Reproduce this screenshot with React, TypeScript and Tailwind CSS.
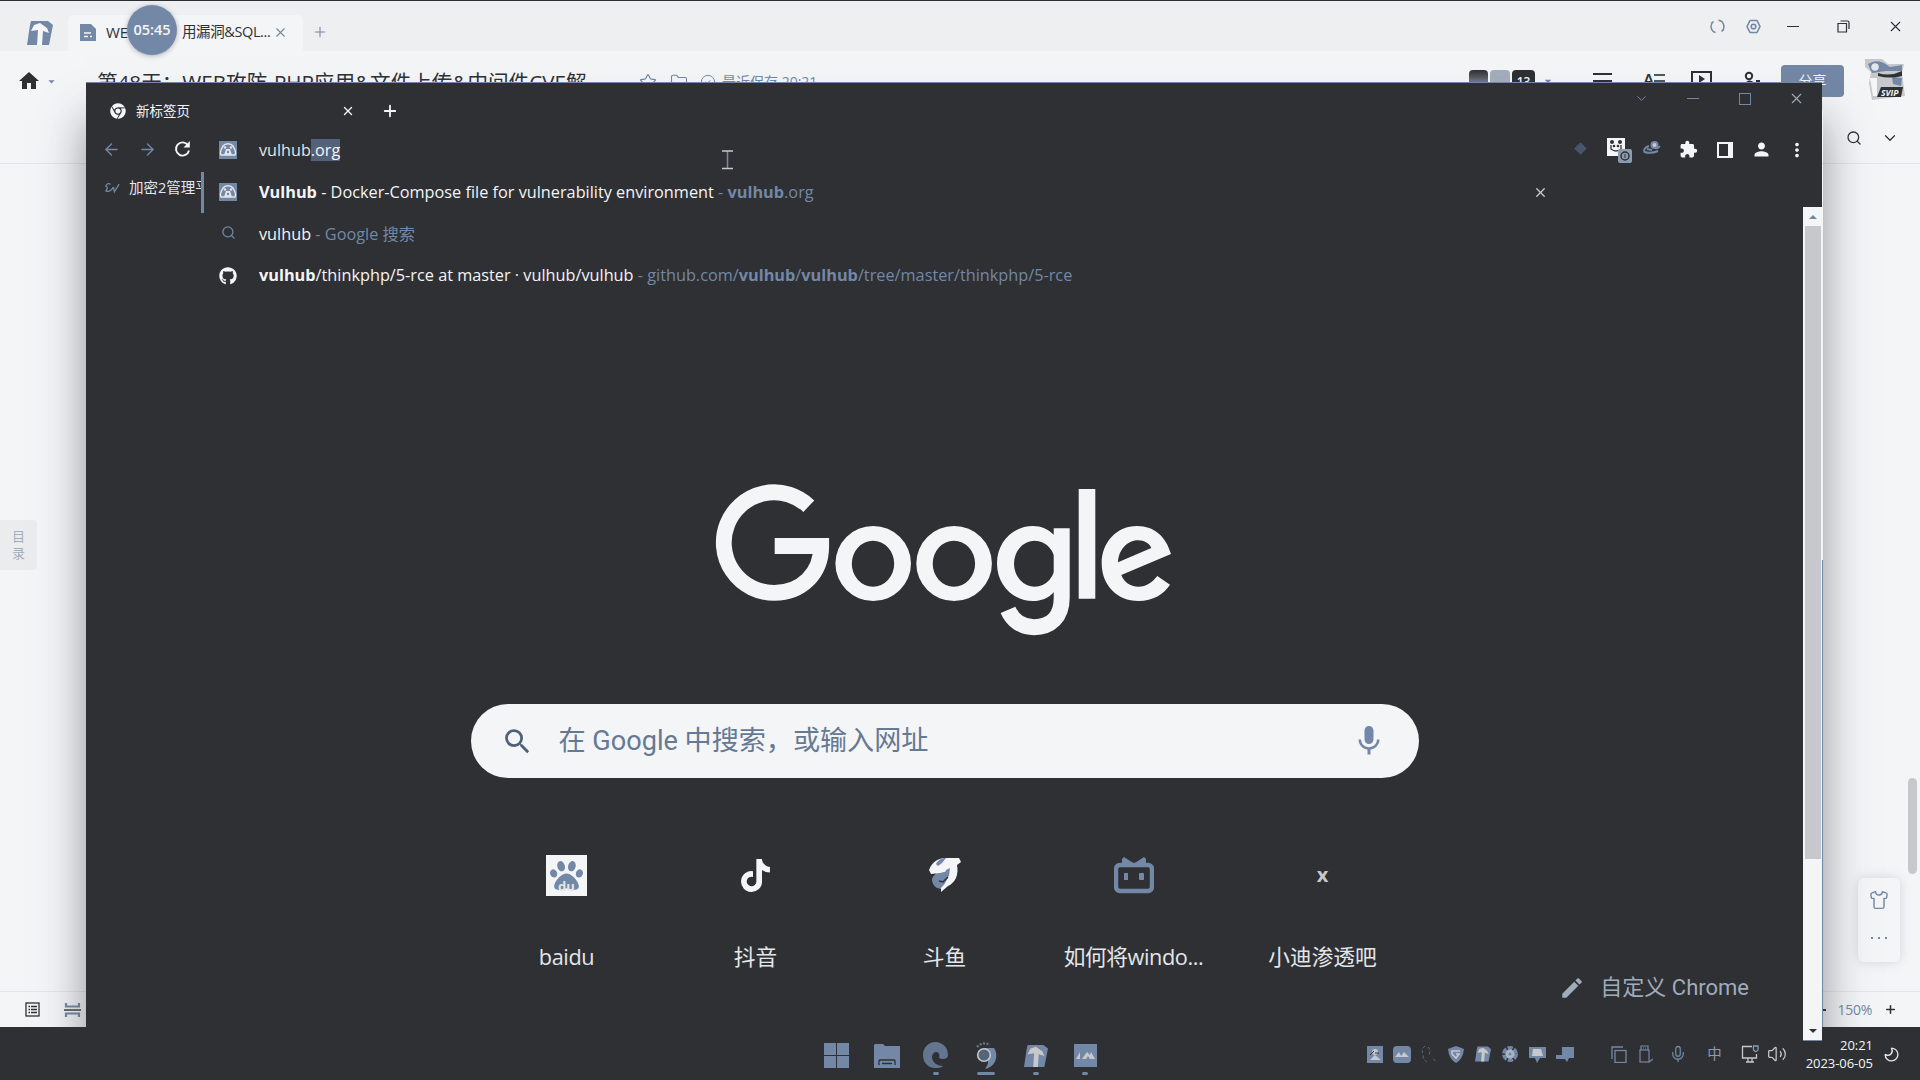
import React from "react";
import {
  MdHome, MdArrowDropDown, MdExtension, MdPerson, MdMoreVert, MdSearch, MdMic, MdEdit,
} from "react-icons/md";
import { FaGithub, FaPaw, FaTiktok, FaChrome } from "react-icons/fa";
import {
  ArrowLeft, ArrowRight, X, Plus, Search, ChevronDown, Star, Folder, CircleCheck, Shirt,
  Mic, Volume2, Moon,
} from "lucide-react";

const ui = "font-['Open_Sans','Noto_Sans_CJK_SC',sans-serif]";
const blue = "text-[#7388a6]";

function Slot({ w, children, className = "" }: { w: string; children?: React.ReactNode; className?: string }) {
  return <div className={`flex shrink-0 items-center justify-center ${w} ${className}`}>{children}</div>;
}

function TLogo({ size, bg, fg }: { size: number; bg: string; fg: string }) {
  return (
    <svg width={size} height={size} viewBox="0 0 26 24" className="shrink-0">
      <path d="M4 0H21L26 4L22 24H0L3 4Z" fill={bg} />
      <path d="M4 10L7 4L13 2L20 7L22 12L16 10L15 24H10L11 9Z" fill={fg} />
    </svg>
  );
}

function VulhubIcon() {
  return (
    <svg width="18" height="18" viewBox="0 0 18 18" className="shrink-0">
      <rect width="18" height="18" fill="#7388a6" />
      <path d="M2 14C0 10 3 8 4 5C6 2 12 2 14 5C15 8 18 10 16 14Z" fill="none" stroke="#e4e6ea" strokeWidth="1.4" />
      <path d="M5 14L7 8H11L13 14Z" fill="#e4e6ea" />
      <circle cx="6" cy="6.5" r="1.2" fill="#e4e6ea" />
      <circle cx="12" cy="6.5" r="1.2" fill="#e4e6ea" />
      <circle cx="9" cy="11" r="1.2" fill="#7388a6" />
    </svg>
  );
}

function GoogleLogo() {
  return (
    <svg width="500" height="190" viewBox="0 0 500 190" role="img" aria-label="Google" className="block">
      <g fill="none" stroke="#f4f5f7">
        <path d="M118.8 46.2A50.3 50.3 0 1 0 84.3 132.9C111 132.9 131.2 114 131.2 86H84.7" strokeWidth="15.8" />
        <path d="M371.7 68.3V138C371.7 157 360.5 167.2 344 167.2C332 167.2 322.5 160.5 318 149.8" strokeWidth="16" />
        <path d="M397 29V138.7" strokeWidth="16.6" />
      </g>
      <g fill="#f4f5f7" fillRule="evenodd">
        <path d="M145.4 103.5a37.8 37.5 0 1 0 75.6 0a37.8 37.5 0 1 0 -75.6 0ZM161.8 103.7a21.2 23 0 1 0 42.4 0a21.2 23 0 1 0 -42.4 0Z" />
        <path d="M226.3 103.5a37.8 37.5 0 1 0 75.6 0a37.8 37.5 0 1 0 -75.6 0ZM242.7 103.7a21.2 23 0 1 0 42.4 0a21.2 23 0 1 0 -42.4 0Z" />
        <path d="M364 75C358 69 351 66 343 66C323 66 307 82 307 103.5C307 125 323 141 343 141C351 141 358 138.5 364 132ZM324 103.7a20.7 23 0 1 0 41.4 0a20.7 23 0 1 0 -41.4 0Z" />
        <path d="M481 94L431.3 115C434 122 440 126.7 448.5 126.7C456.5 126.7 462 122.5 467.3 116L480 124.7C474 134 463 141 448.5 141C427 141 411.7 125 411.7 103.5C411.7 82 427 66 447 66C465 66 476 77 481 94ZM428 102.3L461.3 88C459.5 83.5 454.5 80.3 448 80.3C437 80.3 428.5 90 428 102.3Z" />
      </g>
    </svg>
  );
}

function DouyuIcon() {
  return (
    <svg width="34" height="36" viewBox="0 0 34 36">
      <path d="M4 22C6 16 14 12 18 12L24 24L14 32C8 32 4 28 4 22Z" fill="#7388a6" />
      <path d="M1 13C4 5 10 1 18 1H31L33 5L29 8C31 18 27 26 20 29L13 35V31C20 24 21 18 20 14L12 16L3 17Z" fill="#f4f5f7" />
      <path d="M8 7C10 3 14 1 18 1L14 6L10 9Z" fill="#7388a6" />
      <path d="M18 13L22 11L21 19L16 22Z" fill="#7388a6" />
      <path d="M11 24L15 25L20 20" fill="none" stroke="#2e3034" strokeWidth="1.5" />
    </svg>
  );
}

function BiliIcon() {
  return (
    <svg width="40" height="37" viewBox="0 0 40 37">
      <rect x="2" y="8" width="36" height="26" rx="4" fill="none" stroke="#7388a6" strokeWidth="4.4" />
      <path d="M8 8V2L10 0L20 6.500L30 0L32 2V8Z" fill="#7388a6" />
      <rect x="10" y="16" width="4" height="7" fill="#7388a6" />
      <rect x="25" y="16" width="5" height="7" rx="1" fill="#7388a6" />
    </svg>
  );
}

function EditorHeader() {
  return (
    <header className="shrink-0">
      <div className="flex h-[51px] items-end border-t border-[#2e3034] bg-[#eeeff1]">
        <div className="flex h-full w-[68px] items-center pl-[27px] pt-[14px]"><TLogo size={26} bg="#7388a6" fg="#f4f5f7" /></div>
        <div className="flex h-[36px] w-[235px] items-center rounded-t-md bg-[#f4f5f7] pb-[2px] pl-3 text-[15px] text-[#2e3034]">
          <svg width="16" height="17" viewBox="0 0 16 17"><path d="M0 0H11L16 5V17H0Z" fill="#7388a6" /><path d="M4 9H11M4 12.5H8M10 12.5H12" stroke="#f4f5f7" strokeWidth="1.4" /></svg>
          <span className="ml-[10px] w-[76px]">WE</span>
          <span className="whitespace-nowrap text-[14.5px] tracking-[-0.4px]">用漏洞&amp;SQL...</span>
          <X size={15} strokeWidth={1.8} className="ml-auto mr-[15px] text-[#7388a6]" />
        </div>
        <Slot w="w-[34px]" className="h-[36px] pb-[2px]"><Plus size={16} strokeWidth={1.6} className={blue} /></Slot>
        <div className="ml-auto flex h-full items-center">
          <Slot w="w-[36px]">
            <svg width="15" height="15" viewBox="0 0 15 15" fill="none" stroke="#7388a6" strokeWidth="1.5"><path d="M1 4.500L3.500 2.500M3.500 2.500A6.300 6.300 0 0 0 5.500 13.500M14 10.500L11.500 12.500M11.500 12.500A6.300 6.300 0 0 0 8.500 1.300" /></svg>
          </Slot>
          <Slot w="w-[36px]">
            <svg width="15" height="15" viewBox="0 0 15 15" fill="none" stroke="#7388a6" strokeWidth="1.6"><path d="M4 1.5H11L14 7.5L11 13.5H4L1 7.5Z" strokeLinejoin="round" /><circle cx="7.5" cy="7.5" r="2.3" /></svg>
          </Slot>
          <Slot w="w-[44px]"><span className="h-px w-[12px] bg-[#2e3034]" /></Slot>
          <Slot w="w-[56px]">
            <svg width="13" height="13" viewBox="0 0 13 13" fill="none" stroke="#2e3034" strokeWidth="1.2"><path d="M1 3.5H9.5V12H1ZM3.5 1H10.5Q12 1 12 2.5V9" /></svg>
          </Slot>
          <Slot w="w-[49px]"><X size={17} strokeWidth={1.5} className="text-[#2e3034]" /></Slot>
        </div>
      </div>
      <div className="flex h-[112px] items-start bg-[#f4f5f7]">
        <div className="flex w-[97px] items-center pl-[17px] pt-[18px] text-[#2e3034]">
          <MdHome size={24} />
          <MdArrowDropDown size={15} className="ml-[3px] text-[#7388a6]" />
        </div>
        <h1 className="w-[542px] whitespace-nowrap pt-[13px] text-[20.6px] leading-[36px] text-[#2e3034]">第48天：WEB攻防-PHP应用&amp;文件上传&amp;中间件CVE解</h1>
        <div className="flex items-center pt-[21px] text-[#7388a6]">
          <Star size={18} strokeWidth={1.5} />
          <Folder size={18} strokeWidth={1.5} className="ml-[13px]" />
          <CircleCheck size={16} strokeWidth={1.5} className="ml-[12px]" />
          <span className="ml-[6px] whitespace-nowrap text-[14px] leading-5">最近保存 20:21</span>
        </div>
        <div className="ml-auto flex items-start">
          <div className="mt-[19px] flex gap-[2px]">
            <span className="h-5 w-[19px] rounded bg-gradient-to-b from-[#2e3034] to-[#a3adbb]" />
            <span className="h-5 w-[20px] rounded bg-[#a3adbb]" />
            <span className="h-5 w-[23px] rounded bg-[#2e3034] pt-[2px] text-center text-[12px] font-semibold leading-5 text-[#f4f5f7]">13</span>
          </div>
          <MdArrowDropDown size={16} className="ml-[5px] mt-[22px] text-[#7388a6]" />
          <div className="ml-[37px] mt-[22px] flex w-[19px] flex-col gap-[5px]">
            <span className="h-[2px] bg-[#2e3034]" /><span className="h-[2px] bg-[#2e3034]" />
          </div>
          <div className="ml-[31px] mt-[19px] flex w-[22px] text-[17px] font-semibold leading-5 text-[#2e3034]">
            A
            <span className="mt-[4px] flex w-[11px] flex-col gap-[4px]"><span className="h-[2px] bg-[#4b586b]" /><span className="h-[2px] bg-[#4b586b]" /></span>
          </div>
          <svg width="21" height="18" viewBox="0 0 21 18" className="ml-[26px] mt-[20px]"><rect x="1" y="1" width="19" height="16" fill="none" stroke="#2e3034" strokeWidth="2" /><path d="M8 4L14 8L8 12Z" fill="#2e3034" /></svg>
          <svg width="20" height="18" viewBox="0 0 20 18" className="ml-[32px] mt-[20px]" fill="none" stroke="#2e3034" strokeWidth="2"><circle cx="5" cy="5" r="3.2" /><path d="M0 15Q5 7 10 13M12 10H16" /></svg>
          <div className="ml-[17px] mt-[14px] h-[32px] w-[63px] rounded-[4px] bg-[#7388a6] text-center text-[14px] leading-8 text-[#f4f5f7]">分享</div>
          <svg width="44" height="44" viewBox="0 0 44 44" className="ml-[20px] mr-[12px] mt-[7px]">
            <path d="M1 1L18 1L24 6L40 6L38 15L41 38L8 42L5 25L7 14L1 9Z" fill="#c6c8cc" />
            <path d="M4 6Q12 1 20 5L26 9L38 7V13L22 13L8 15ZM28 19L38 20L37 28L29 26Z" fill="#7388a6" />
            <circle cx="11" cy="9" r="4.500" fill="#e4e6ea" stroke="#7388a6" strokeWidth="1.500" />
            <path d="M14 15Q26 19 38 13V18Q26 21 14 18Z" fill="#2e3034" />
            <path d="M6 20H13V38H9Z" fill="#f4f5f7" />
            <path d="M17 29H39L37 39H13Z" fill="#2e3034" />
            <text x="17" y="38" fontSize="8.5" fontWeight="700" fontStyle="italic" fill="#f4f5f7" fontFamily="Open Sans">SVIP</text>
          </svg>
        </div>
      </div>
    </header>
  );
}

function EditorTools() {
  return (
    <div className="flex text-[#2e3034]">
      <Slot w="w-[36px]"><Search size={16} strokeWidth={1.9} /></Slot>
      <Slot w="w-[36px]"><ChevronDown size={18} strokeWidth={1.6} /></Slot>
    </div>
  );
}

function TabStrip() {
  return (
    <div className="flex h-[47px] items-start">
      <div className="mt-[17px] flex h-[24px] w-[278px] items-center pl-[24px]">
        <FaChrome size={16} className="shrink-0 text-[#f4f5f7]" />
        <span className="ml-[10px] text-[13.5px] text-[#f4f5f7]">新标签页</span>
        <X size={14} strokeWidth={2.4} className="ml-auto mr-[9px] text-[#f4f5f7]" />
      </div>
      <Slot w="w-[52px]" className="mt-[17px] h-[24px]"><Plus size={18} strokeWidth={2.4} className="text-[#f4f5f7]" /></Slot>
      <div className="ml-auto flex h-[33px] items-center text-[#7388a6]">
        <Slot w="w-[52px]"><ChevronDown size={15} strokeWidth={1.6} /></Slot>
        <Slot w="w-[52px]"><span className="h-px w-[12px] bg-[#7388a6]" /></Slot>
        <Slot w="w-[51px]"><span className="h-[12px] w-[12px] border border-[#7388a6]" /></Slot>
        <Slot w="w-[52px]"><X size={17} strokeWidth={1.5} className="text-[#a3adbb]" /></Slot>
      </div>
    </div>
  );
}

function Toolbar() {
  return (
    <div className="flex h-[41px] items-center">
      <div className="flex w-[133px] items-center pl-[16px]">
        <ArrowLeft size={19} strokeWidth={1.7} className={blue} />
        <ArrowRight size={19} strokeWidth={1.7} className="ml-[17px] text-[#7388a6]" />
        <svg width="17" height="17" viewBox="0 0 17 17" className="ml-[17px]" fill="none" stroke="#f4f5f7" strokeWidth="1.9"><path d="M14 4.2A6.6 6.6 0 1 0 15 9.5" /><path d="M15.8 0V6.5H9.5Z" fill="#f4f5f7" stroke="none" /></svg>
      </div>
      <VulhubIcon />
      <div className="ml-[22px] mt-px whitespace-nowrap text-[16.2px] leading-[22px] text-[#e4e6ea]">
        vulhub<span className="inline-block bg-[#53617a] text-[#f4f5f7]">.org</span>
      </div>
      <div className="ml-auto flex items-center text-[#f4f5f7]">
        <Slot w="w-[36px]"><span className="-mt-[3px] h-[9px] w-[9px] rotate-45 bg-[#49556a]" /></Slot>
        <Slot w="w-[36px]" className="pl-[8px]">
          <svg width="26" height="26" viewBox="0 0 26 26">
            <rect x="0" y="1" width="18" height="18" fill="#f4f5f7" />
            <circle cx="5" cy="5" r="2" fill="#2e3034" /><circle cx="13" cy="5" r="2" fill="#2e3034" />
            <path d="M4 8V12Q9 16 14 12V8" fill="none" stroke="#2e3034" strokeWidth="1.3" />
            <circle cx="7" cy="9" r="1.3" fill="#2e3034" /><circle cx="11" cy="9" r="1.3" fill="#2e3034" />
            <rect x="11" y="12" width="14" height="14" rx="2" fill="#8d9bb0" />
            <circle cx="18" cy="19" r="4" fill="none" stroke="#2e3034" strokeWidth="1.5" /><path d="M18 17V21" stroke="#2e3034" />
          </svg>
        </Slot>
        <Slot w="w-[36px]" className="pb-[4px]">
          <svg width="18" height="14" viewBox="0 0 18 14" fill="none" stroke="#7388a6" strokeWidth="2"><path d="M6 5Q0 7 1.5 11Q8 13 15 10M4 8L9 9M10 6Q14 9 17 5" /><circle cx="11.5" cy="4" r="3" fill="#c6c8cc" /></svg>
        </Slot>
        <Slot w="w-[37px]"><MdExtension size={19} /></Slot>
        <Slot w="w-[36px]"><span className="flex h-[16px] w-[16px] items-center bg-[#f4f5f7] pl-[2px]"><span className="h-[12px] w-[9px] bg-[#2e3034]" /></span></Slot>
        <Slot w="w-[36px]"><MdPerson size={21} /></Slot>
        <Slot w="w-[35px]"><MdMoreVert size={22} /></Slot>
        <span className="w-[8px]" />
      </div>
    </div>
  );
}

function Suggestions() {
  const row = "flex items-center whitespace-nowrap text-[16.27px] text-[#f4f5f7]";
  return (
    <div className="flex flex-col">
      <div className={`${row} h-[42px]`}>
        <span className="h-[41px] w-[3px] bg-[#7388a6]" />
        <span className="ml-[15px]"><VulhubIcon /></span>
        <p className="ml-[22px]"><b className="font-bold">Vulhub</b> - Docker-Compose file for vulnerability environment <span className={blue}>- <b>vulhub</b>.org</span></p>
        <X size={15} strokeWidth={2.2} className="ml-auto mr-[274px] text-[#c6c8cc]" />
      </div>
      <div className={`${row} h-[42px]`}>
        <span className="ml-[18px] flex w-[18px] justify-center pb-[3px]"><Search size={15} strokeWidth={2.1} className={blue} /></span>
        <p className="ml-[22px] mt-px">vulhub <span className={blue}>- Google 搜索</span></p>
      </div>
      <div className={`${row} h-[41px]`}>
        <FaGithub size={18} className="ml-[18px]" />
        <p className="ml-[22px]"><b>vulhub</b>/thinkphp/5-rce at master · vulhub/vulhub <span className={blue}>- github.com/<b>vulhub</b>/<b>vulhub</b>/tree/master/thinkphp/5-rce</span></p>
      </div>
    </div>
  );
}

function Shortcut({ label, children, tight = false }: { label: string; children: React.ReactNode; tight?: boolean }) {
  return (
    <div className="flex w-[189px] flex-col items-center">
      <div className="flex h-[42px] items-center justify-center">{children}</div>
      <span className={`mt-[46px] whitespace-nowrap text-[21.7px] leading-[30px] text-[#e4e6ea] ${tight ? "tracking-[-0.4px]" : ""}`}>{label}</span>
    </div>
  );
}

function NewTabPage() {
  return (
    <div className="flex min-h-0 flex-1 flex-col items-center">
      <div className="-ml-[9px] mt-[253px]"><GoogleLogo /></div>
      <div className="mt-[54px] flex h-[74px] w-[948px] items-center rounded-full bg-[#f4f5f7] pl-[30px] pr-[32px] font-['Roboto','Noto_Sans_CJK_SC',sans-serif]">
        <MdSearch size={33} className="text-[#4f6078]" />
        <span className="ml-[25px] whitespace-nowrap text-[27.1px] text-[#667993]">在 Google 中搜索，或输入网址</span>
        <MdMic size={36} className="ml-auto text-[#7388a6]" />
      </div>
      <div className="mt-[76px] flex">
        <Shortcut label="baidu" tight>
          <span className="relative flex h-[41px] w-[41px] items-center justify-center bg-[#f4f5f7] text-[#7388a6]">
            <FaPaw size={33} />
            <span className="absolute bottom-[4px] text-[13px] font-bold leading-[12px] text-[#e4e6ea]">du</span>
          </span>
        </Shortcut>
        <Shortcut label="抖音"><FaTiktok size={33} className="text-[#f4f5f7]" /></Shortcut>
        <Shortcut label="斗鱼"><DouyuIcon /></Shortcut>
        <Shortcut label="如何将windo..." tight><BiliIcon /></Shortcut>
        <Shortcut label="小迪渗透吧"><span className="font-['Open_Sans'] text-[20px] font-bold text-[#c6c8cc]">x</span></Shortcut>
      </div>
      <div className="flex w-full items-center justify-end pr-[54px] font-['Roboto','Noto_Sans_CJK_SC',sans-serif] text-[#a0abbc]">
        <MdEdit size={26} />
        <span className="ml-[15px] text-[22px] leading-[32px]">自定义 Chrome</span>
      </div>
    </div>
  );
}

function ScrollTrack() {
  return (
    <div className="flex w-[19px] flex-col items-center border-b border-[#7388a6] bg-[#f4f5f7]">
      <div className="flex h-[19px] items-center"><span className="border-x-4 border-b-4 border-x-transparent border-b-[#7388a6]" /></div>
      <div className="h-[633px] w-[16px] bg-[#c6c8cc]" />
      <div className="mt-auto flex h-[19px] items-center"><span className="border-x-4 border-t-4 border-x-transparent border-t-[#2e3034]" /></div>
    </div>
  );
}

function BrowserWindow() {
  return (
    <section className="absolute left-[86px] top-[83px] flex h-[958px] w-[1736px] flex-col bg-[#2e3034] shadow-[0_-1px_0_#7388a6]">
      <div className="-mt-px"><TabStrip /></div>
      <Toolbar />
      <div className="flex h-[37px] items-center pb-[2px] pl-[18px]">
        <svg width="17" height="12" viewBox="0 0 18 12" fill="none" stroke="#7388a6" strokeWidth="1.4"><path d="M7 2Q3 0 2 4Q5 5 2 9Q6 11 10 5M10 5L11 10L16 2" /></svg>
        <span className="ml-[8px] w-[72px] overflow-hidden whitespace-nowrap text-[14.5px] text-[#e4e6ea]">加密2管理平</span>
      </div>
      <div className="flex min-h-0 flex-1">
        <NewTabPage />
        <ScrollTrack />
      </div>
      <div className="absolute left-[115px] right-0 top-[88px]"><Suggestions /></div>
      <svg width="11" height="20" viewBox="0 0 11 20" className="absolute left-[636px] top-[67px]" fill="none"><path d="M5.5 1V19" stroke="#7388a6" strokeWidth="1.6" /><path d="M0 1H11M0 18.5H11" stroke="#c6c8cc" strokeWidth="1.3" /></svg>
    </section>
  );
}

function Pinned({ children, mark }: { children: React.ReactNode; mark?: string }) {
  return (
    <div className="flex w-[49.7px] flex-col items-center pt-[15px]">
      <div className="flex h-[27px] items-center">{children}</div>
      {mark && <span className={`mt-[3px] h-[3px] rounded-full bg-[#7388a6] ${mark}`} />}
    </div>
  );
}

function Taskbar() {
  return (
    <footer className="flex h-[53px] shrink-0 justify-between bg-[#2e3034] pl-[812px]">
      <div className="flex">
        <Pinned>
          <div className="grid grid-cols-2 gap-px">
            <span className="h-3 w-3 bg-[#7388a6]" /><span className="h-3 w-3 bg-[#7388a6]" />
            <span className="h-3 w-3 bg-[#7388a6]" /><span className="h-3 w-3 bg-[#7388a6]" />
          </div>
        </Pinned>
        <Pinned>
          <svg width="26" height="24" viewBox="0 0 26 24"><path d="M1 0H9L11 2H26V24H0V1Z" fill="#7388a6" /><path d="M5 21V17Q5 16 6 16H20Q21 16 21 17V21M8 19.500H18" fill="none" stroke="#2e3034" strokeWidth="1.3" /></svg>
        </Pinned>
        <Pinned mark="w-[6px]">
          <svg width="26" height="27" viewBox="0 0 26 27"><path d="M25 13C25 5 19 0 12.5 0C5 0 0 6 0 13C0 21 6 27 14 26C17 26 19 25 20 24C14 24 9 20 9 15C9 12 11 10 13.5 10C16 10 17 13 16 16C20 18 25 17 25 13Z" fill="#64768f" /></svg>
        </Pinned>
        <Pinned mark="w-[18px]">
          <svg width="24" height="27" viewBox="0 0 24 27"><path d="M3 5Q9 -1 16 3" fill="none" stroke="#64768f" strokeWidth="2.5" strokeDasharray="2 1.5" /><path d="M10 6H20C25 13 22 25 11 27C14 23 14 21 14 19Z" fill="#7388a6" /><circle cx="10" cy="13" r="6.3" fill="#566479" stroke="#c6c8cc" strokeWidth="1.6" /></svg>
        </Pinned>
        <Pinned mark="w-[6px]"><TLogo size={24} bg="#7388a6" fg="#c6c8cc" /></Pinned>
        <Pinned mark="w-[6px]">
          <svg width="23" height="23" viewBox="0 0 23 23"><rect width="23" height="23" fill="#7388a6" /><path d="M2 15L6 8V15ZM8 15L13 8L16 11L17 8L21 15H16L14 12L12 15Z" fill="#c6c8cc" /></svg>
        </Pinned>
      </div>
      <div className="flex items-center pt-[1px] text-[#7388a6]">
        <Slot w="w-[26px]"><svg width="16" height="17" viewBox="0 0 16 17"><rect width="16" height="17" fill="#7388a6" /><circle cx="8" cy="6" r="3" fill="#c6c8cc" /><path d="M3 14L8 9L14 14Z" fill="#c6c8cc" /><path d="M3 9L7 5M8 7H12" stroke="#2e3034" /></svg></Slot>
        <Slot w="w-[28px]"><svg width="18" height="17" viewBox="0 0 18 17"><rect width="18" height="17" rx="4" fill="#7388a6" /><path d="M2 11L6 6L8 10L11 6L16 11Z" fill="#c6c8cc" /></svg></Slot>
        <Slot w="w-[26px]"><svg width="16" height="17" viewBox="0 0 16 17" fill="none" stroke="#596980" strokeDasharray="3 2"><path d="M4 0Q0 3 2 9Q2 16 8 16M7 1Q10 4 8 9M12 13L16 16" /></svg></Slot>
        <Slot w="w-[28px]"><svg width="16" height="17" viewBox="0 0 16 17"><path d="M8 0L16 3Q15 13 8 17Q1 13 0 3Z" fill="#7388a6" /><path d="M12 5H4V8L8 12L11 8H8" fill="none" stroke="#c6c8cc" strokeWidth="1.6" /></svg></Slot>
        <Slot w="w-[26px]"><TLogo size={16} bg="#7388a6" fg="#c6c8cc" /></Slot>
        <Slot w="w-[28px]"><svg width="16" height="16" viewBox="0 0 16 16"><circle cx="8" cy="8" r="6" fill="none" stroke="#7388a6" strokeWidth="4" strokeDasharray="5 1.3" /><circle cx="8" cy="8" r="4.5" fill="#a9b3c1" /><circle cx="8" cy="8" r="1.5" fill="#7388a6" /></svg></Slot>
        <Slot w="w-[27px]"><svg width="17" height="17" viewBox="0 0 17 17"><path d="M0 1H17V12H11L8 17L6 12H0Z" fill="#7388a6" /><path d="M4 3H12L14 10H3Z" fill="#c6c8cc" /></svg></Slot>
        <Slot w="w-[27px]"><svg width="18" height="15" viewBox="0 0 18 15"><path d="M6 0H18V11H13L11 15L9 12H0V8H6Z" fill="#7388a6" /></svg></Slot>
        <Slot w="w-[54px]" className="pl-[27px]"><svg width="16" height="17" viewBox="0 0 16 17" fill="none" stroke="#7388a6" strokeWidth="1.3"><rect x="4" y="4.500" width="11" height="12" /><path d="M12 1H1V13" /></svg></Slot>
        <Slot w="w-[28px]"><svg width="14" height="18" viewBox="0 0 14 18" fill="none" stroke="#7388a6" strokeWidth="1.2"><rect x="1" y="5" width="9" height="12" /><path d="M2 5V1H9V5M4 3H5M6 3H7M10 17L14 14" /></svg></Slot>
        <Slot w="w-[36px]"><Mic size={18} strokeWidth={1.7} /></Slot>
        <Slot w="w-[37px]"><span className="text-[14.5px] text-[#8d9bb0]">中</span></Slot>
        <Slot w="w-[33px]"><svg width="18" height="18" viewBox="0 0 18 18" fill="none" stroke="#c6c8cc" strokeWidth="1.3"><path d="M11 1.500H1.500V13H15.500V9M5 17H13M7 13V17M11 13V17" /><path d="M12.500 1H17V5Q15 8 12.500 5Z" stroke="#8d9bb0" /></svg></Slot>
        <Slot w="w-[22px]"><Volume2 size={20} strokeWidth={1.5} className="text-[#c6c8cc]" /></Slot>
        <div className="w-[85px] whitespace-nowrap text-right text-[13px] leading-[18px] tracking-[-0.05px] text-[#f4f5f7]">20:21<br />2023-06-05</div>
        <Slot w="w-[36px]" className="mr-[11px]"><Moon size={17} strokeWidth={1.9} className="-scale-x-100 text-[#e4e6ea]" /></Slot>
      </div>
    </footer>
  );
}

export default function App() {
  return (
    <div className={`relative flex h-[1080px] w-[1920px] flex-col overflow-hidden bg-[#f4f5f7] ${ui}`}>
      <div className="relative flex min-h-0 flex-1 flex-col overflow-hidden">
        <EditorHeader />
        <div className="-mt-[34px] mb-[16px] flex h-[18px] justify-end pr-[12px]"><EditorTools /></div>
        <div className="flex min-h-0 flex-1 justify-between border-t border-[#e3e4e7]">
          <div className="mt-[356px] flex h-[50px] w-[37px] flex-col items-center justify-center rounded-r bg-[#ebecee] text-[13px] leading-[17px] text-[#a3adbb]">
            <span>目</span><span>录</span>
          </div>
          <div className="mr-[3px] flex items-start pt-[614px]">
            <div className="mr-[8px] mt-[100px] flex h-[84px] w-[42px] flex-col items-center rounded-md bg-[#f4f5f7] pt-[12px] text-[#7388a6] shadow-[0_0_12px_rgba(60,70,90,0.18)]">
              <Shirt size={20} strokeWidth={1.7} />
              <div className="mt-[27px] flex gap-[5px]"><i className="size-[2px] bg-[#7388a6]" /><i className="size-[2px] bg-[#7388a6]" /><i className="size-[2px] bg-[#7388a6]" /></div>
            </div>
            <span className="h-[96px] w-[9px] rounded-full bg-[#c6c8cc]" />
          </div>
        </div>
        <div className="flex h-[36px] shrink-0 items-center border-t border-[#e3e4e7] pl-[25px] pr-[23px]">
          <svg width="15" height="15" viewBox="0 0 15 15" fill="none" stroke="#2e3034" strokeWidth="1.3"><rect x="1" y="1" width="13" height="13" /><path d="M3.5 4.5H5M6 4.5H12M3.5 7.5H5M6 7.5H12M3.5 10.5H5M6 10.5H12" /></svg>
          <svg width="17" height="14" viewBox="0 0 17 14" className="ml-[24px]" fill="none" stroke="#7388a6" strokeWidth="2.2"><path d="M2 0V3.5H15V0M2 14V10.5H15V14" /><path d="M0 7H17" stroke="#2e3034" strokeWidth="1.4" /></svg>
          <span className="ml-auto h-[2px] w-[5px] bg-[#2e3034]" />
          <span className="ml-[12px] text-[14px] tracking-[-0.3px] text-[#7388a6]">150%</span>
          <Plus size={13} strokeWidth={2.8} className="ml-[12px] text-[#2e3034]" />
        </div>
        <div className="pointer-events-none absolute left-[86px] top-[110px] h-[960px] w-[1737px] shadow-[0_10px_42px_rgba(60,65,75,0.55)]" />
        <div className="pointer-events-none absolute left-[1821px] top-[560px] h-[467px] w-[2px] bg-[#7388a6]" />
      </div>
      <Taskbar />
      <BrowserWindow />
      <div className="absolute left-[127px] top-[5px] flex h-[50px] w-[50px] items-center justify-center rounded-full bg-[#7388a6] text-[14.5px] font-semibold text-[#f4f5f7] shadow-[0_1px_5px_rgba(60,70,90,0.4)]">05:45</div>
    </div>
  );
}
